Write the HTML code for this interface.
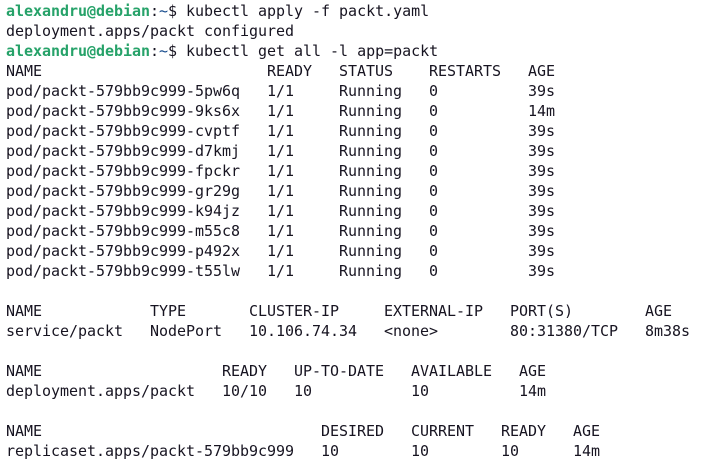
<html><head><style>
body{margin:0;background:#fff;width:706px;height:470px;overflow:hidden}
pre{margin:0;padding:1px 0 0 6px;font-family:"DejaVu Sans Mono","Liberation Mono",monospace;font-size:15px;letter-spacing:-0.03px;line-height:20px;color:#171421}
.g{color:#26a269;font-weight:bold}.b{color:#12488b}
</style></head><body><pre><span class="g">alexandru@debian</span>:<span class="b">~</span>$ kubectl apply -f packt.yaml
deployment.apps/packt configured
<span class="g">alexandru@debian</span>:<span class="b">~</span>$ kubectl get all -l app=packt
NAME                         READY   STATUS    RESTARTS   AGE
pod/packt-579bb9c999-5pw6q   1/1     Running   0          39s
pod/packt-579bb9c999-9ks6x   1/1     Running   0          14m
pod/packt-579bb9c999-cvptf   1/1     Running   0          39s
pod/packt-579bb9c999-d7kmj   1/1     Running   0          39s
pod/packt-579bb9c999-fpckr   1/1     Running   0          39s
pod/packt-579bb9c999-gr29g   1/1     Running   0          39s
pod/packt-579bb9c999-k94jz   1/1     Running   0          39s
pod/packt-579bb9c999-m55c8   1/1     Running   0          39s
pod/packt-579bb9c999-p492x   1/1     Running   0          39s
pod/packt-579bb9c999-t55lw   1/1     Running   0          39s

NAME            TYPE       CLUSTER-IP     EXTERNAL-IP   PORT(S)        AGE
service/packt   NodePort   10.106.74.34   &lt;none&gt;        80:31380/TCP   8m38s

NAME                    READY   UP-TO-DATE   AVAILABLE   AGE
deployment.apps/packt   10/10   10           10          14m

NAME                               DESIRED   CURRENT   READY   AGE
replicaset.apps/packt-579bb9c999   10        10        10      14m
</pre></body></html>
